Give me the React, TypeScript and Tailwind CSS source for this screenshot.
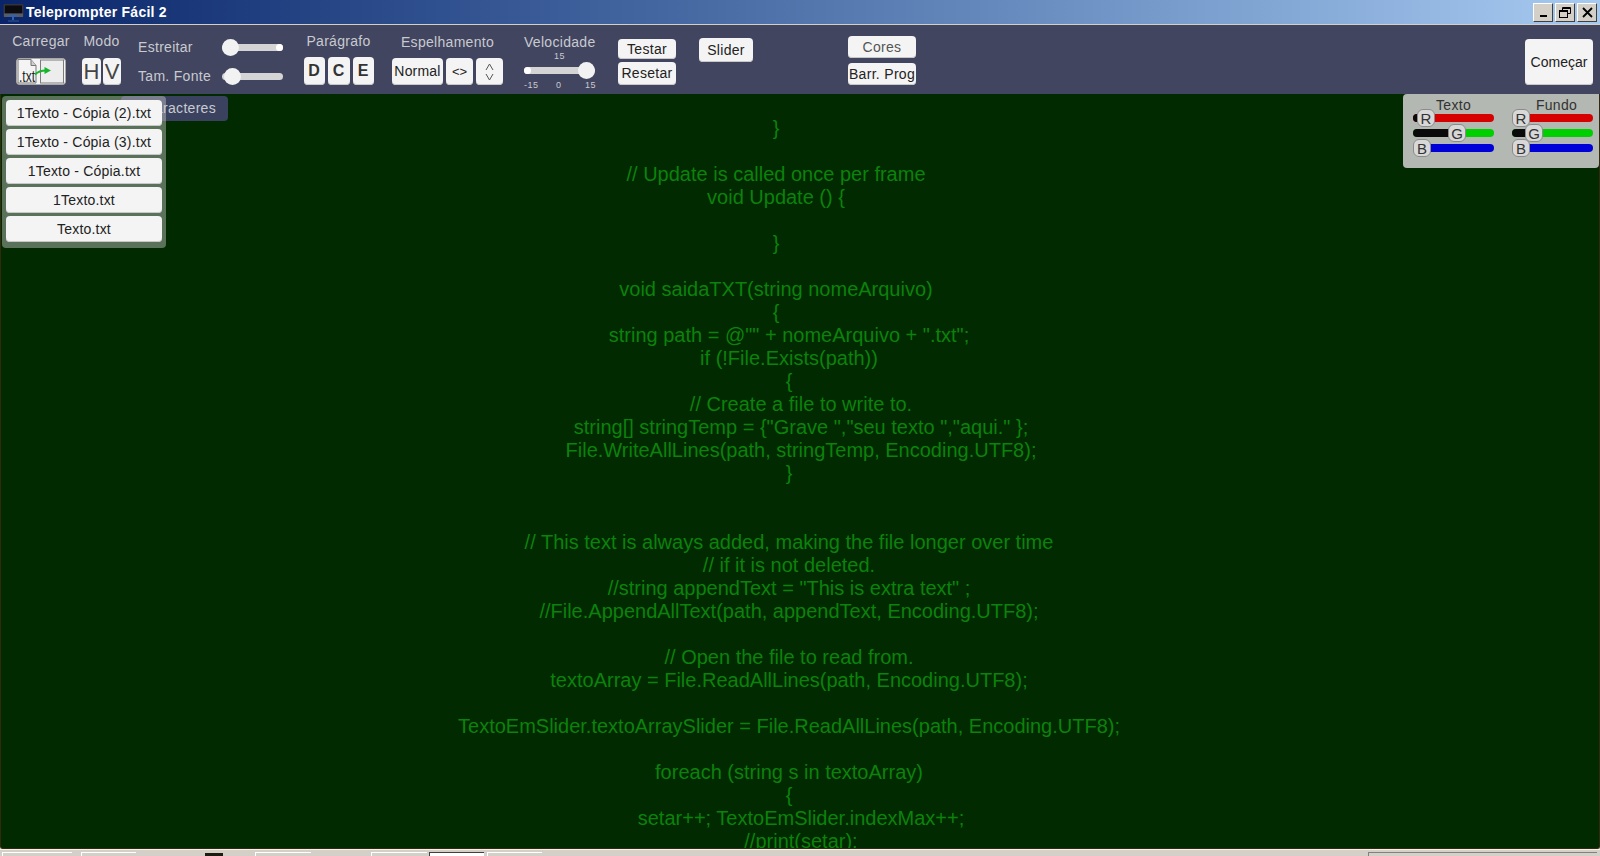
import type { ReactNode } from 'react';

const ARIAL = "font-['Liberation_Sans',Arial,sans-serif]";

type PrompterLine = { text: string; shift?: string };

const SHIFT_A = 'pr-[48px]';
const SHIFT_B = 'pr-[22px]';
const SHIFT_C = 'pl-[2px]';

const LINES: PrompterLine[] = [
  { text: '}', shift: SHIFT_A },
  { text: '' },
  { text: '// Update is called once per frame', shift: SHIFT_A },
  { text: 'void Update () {', shift: SHIFT_A },
  { text: '' },
  { text: '}', shift: SHIFT_A },
  { text: '' },
  { text: 'void saidaTXT(string nomeArquivo)', shift: SHIFT_A },
  { text: '{', shift: SHIFT_A },
  { text: 'string path = @"" + nomeArquivo + ".txt";', shift: SHIFT_B },
  { text: 'if (!File.Exists(path))', shift: SHIFT_B },
  { text: '{', shift: SHIFT_B },
  { text: '// Create a file to write to.', shift: SHIFT_C },
  { text: 'string[] stringTemp = {"Grave ","seu texto ","aqui." };', shift: SHIFT_C },
  { text: 'File.WriteAllLines(path, stringTemp, Encoding.UTF8);', shift: SHIFT_C },
  { text: '}', shift: SHIFT_B },
  { text: '' },
  { text: '' },
  { text: '// This text is always added, making the file longer over time', shift: SHIFT_B },
  { text: '// if it is not deleted.', shift: SHIFT_B },
  { text: '//string appendText = "This is extra text" ;', shift: SHIFT_B },
  { text: '//File.AppendAllText(path, appendText, Encoding.UTF8);', shift: SHIFT_B },
  { text: '' },
  { text: '// Open the file to read from.', shift: SHIFT_B },
  { text: 'textoArray = File.ReadAllLines(path, Encoding.UTF8);', shift: SHIFT_B },
  { text: '' },
  { text: 'TextoEmSlider.textoArraySlider = File.ReadAllLines(path, Encoding.UTF8);', shift: SHIFT_B },
  { text: '' },
  { text: 'foreach (string s in textoArray)', shift: SHIFT_B },
  { text: '{', shift: SHIFT_B },
  { text: 'setar++; TextoEmSlider.indexMax++;', shift: SHIFT_C },
  { text: '//print(setar);', shift: SHIFT_C },
];

const FILES = ['1Texto - Cópia (2).txt', '1Texto - Cópia (3).txt', '1Texto - Cópia.txt', '1Texto.txt', 'Texto.txt'];

function Btn({ className, children }: { className: string; children: ReactNode }) {
  return (
    <div className={`flex items-center justify-center rounded-[4px] bg-[#f4f4f4] text-[#222] shadow-[inset_0_-1px_0_#c8c8c8] ${className}`}>
      {children}
    </div>
  );
}

function Label({ className = '', children }: { className?: string; children: ReactNode }) {
  return <div className={`whitespace-nowrap text-[14px] leading-[16px] tracking-[0.3px] text-[#c9cad0] ${className}`}>{children}</div>;
}

function WhiteSlider({ thumb, endKnob }: { thumb: string; endKnob?: boolean }) {
  return (
    <div className="relative h-[7px] w-[61px] rounded-full bg-[#d4d4d4]">
      <div className={`absolute top-[-5px] h-[17px] w-[17px] rounded-full bg-[#f2f2f2] ${thumb}`} />
      {endKnob && <div className="absolute right-0 top-0 h-[7px] w-[7px] rounded-full bg-white" />}
    </div>
  );
}

function ColorSlider({ letter, track, thumb, fill }: { letter: string; track: string; thumb: string; fill: string }) {
  return (
    <div className={`relative h-[8px] w-[81px] rounded-full ${track}`}>
      <div className={`absolute inset-y-0 left-0 rounded-l-full bg-[#0a0a0a] ${fill}`} />
      <div className={`absolute top-[-5px] flex h-[18px] w-[18px] items-center justify-center rounded-[6px] border border-[#8b8b8b] bg-[#d8d8d8] text-[15px] leading-none text-[#333] ${thumb}`}>
        {letter}
      </div>
    </div>
  );
}

function AppIcon() {
  return (
    <svg width="21" height="21" viewBox="0 0 21 21" className="shrink-0">
      <rect x="0.5" y="2" width="20" height="13" rx="1" fill="#33333a" />
      <rect x="2" y="3.500" width="17" height="8" fill="#0c0c10" />
      <rect x="1" y="11.500" width="19" height="3.500" fill="#565b68" />
      <path d="M6 13h8v1.500h-3v4H9v-4H6z" fill="#2f62b5" />
      <rect x="5" y="18" width="11" height="2" fill="#1f3f7d" />
    </svg>
  );
}

function LoadIcon() {
  return (
    <svg width="50" height="27" viewBox="0 0 50 27">
      <rect x="0.5" y="0.5" width="49" height="26" rx="3" fill="#f4f4f4" stroke="#a8a8a8" />
      <path d="M2 1.500h13l5 6V25H2z" fill="#f4f4f4" stroke="#777" />
      <path d="M15 1.500v6h5" fill="#cfcfcf" stroke="#777" />
      <rect x="24.500" y="2" width="23" height="23" fill="#ededed" stroke="#7c7c7c" />
      <text x="3" y="24" fontFamily="'Liberation Sans', sans-serif" fontSize="16" textLength="16" lengthAdjust="spacingAndGlyphs" fill="#222">.txt</text>
      <path d="M19 16.500c3-3 7-4 11-4" fill="none" stroke="#16b52a" strokeWidth="2" />
      <path d="M28.500 9l6.500 3.500-6.500 3.500z" fill="#16b52a" />
    </svg>
  );
}

function WinButton({ children }: { children: ReactNode }) {
  return (
    <div className="flex h-[19px] w-[20px] items-center justify-center border border-t-white border-l-white border-b-[#404040] border-r-[#404040] bg-[#d4d0c8]">
      {children}
    </div>
  );
}

export default function App() {
  return (
    <div className={`flex h-screen w-[1600px] flex-col overflow-hidden bg-[#d4d0c8] ${ARIAL}`}>
      {/* Title bar */}
      <header className="flex h-[24px] shrink-0 items-center bg-gradient-to-r from-[#0a246a] to-[#a6caf0] pl-[3px] pr-[3px]">
        <AppIcon />
        <span className="ml-[2px] text-[14px] font-bold tracking-[0.25px] text-white">Teleprompter Fácil 2</span>
        <div className="ml-auto flex gap-[2px]">
          <WinButton>
            <div className="mt-[8px] h-[2px] w-[7px] bg-black" />
          </WinButton>
          <WinButton>
            <svg width="12" height="11" viewBox="0 0 12 11" fill="none" stroke="#000">
              <path d="M3.500 3V.5h8v6H9" />
              <path d="M3.500 1.500h8" />
              <rect x="0.500" y="3.500" width="8" height="7" />
              <path d="M.5 4.500h8" />
            </svg>
          </WinButton>
          <WinButton>
            <svg width="11" height="11" viewBox="0 0 11 11" stroke="#000" strokeWidth="1.800">
              <path d="M1 1l9 9M10 1l-9 9" />
            </svg>
          </WinButton>
        </div>
      </header>
      <div className="h-px shrink-0 bg-[#d4d0c8]" />

      {/* Toolbar */}
      <div className="flex h-[69px] shrink-0 bg-[#41455f] pl-[12px]">
        <div className="flex w-[58px] flex-col items-center pt-[8px]">
          <Label>Carregar</Label>
          <div className="mt-[9px]"><LoadIcon /></div>
        </div>
        <div className="ml-[11px] flex w-[41px] flex-col items-center pt-[8px]">
          <Label>Modo</Label>
          <div className="mt-[9px] flex gap-[2px]">
            <Btn className="h-[27px] w-[19px] text-[22px] text-[#444]">H</Btn>
            <Btn className="h-[27px] w-[18px] text-[22px] text-[#444]">V</Btn>
          </div>
        </div>
        <div className="ml-[16px] flex w-[145px] flex-col gap-[13px] pt-[14px]">
          <div className="flex items-center justify-between">
            <Label>Estreitar</Label>
            <WhiteSlider thumb="left-0" endKnob />
          </div>
          <div className="flex items-center justify-between">
            <Label>Tam. Fonte</Label>
            <WhiteSlider thumb="left-[2px]" />
          </div>
        </div>
        <div className="ml-[20px] flex w-[71px] flex-col items-center pt-[8px]">
          <Label>Parágrafo</Label>
          <div className="mt-[8px] flex gap-[3px]">
            <Btn className="h-[28px] w-[21px] text-[16px] font-bold text-[#333]">D</Btn>
            <Btn className="h-[28px] w-[22px] text-[16px] font-bold text-[#333]">C</Btn>
            <Btn className="h-[28px] w-[21px] text-[16px] font-bold text-[#333]">E</Btn>
          </div>
        </div>
        <div className="ml-[18px] flex w-[111px] flex-col items-center pt-[9px]">
          <Label>Espelhamento</Label>
          <div className="mt-[8px] flex gap-[3px]">
            <Btn className="h-[27px] w-[51px] text-[14px] tracking-[0.2px]">Normal</Btn>
            <Btn className="h-[27px] w-[27px] text-[13px]">{'<>'}</Btn>
            <Btn className="h-[27px] w-[27px] text-[#666]">
              <svg width="9" height="18" viewBox="0 0 9 18" fill="none" stroke="#555">
                <path d="M1 7l3.500-6L8 7M1 11l3.500 6L8 11" />
              </svg>
            </Btn>
          </div>
        </div>
        <div className="ml-[21px] flex w-[72px] flex-col pt-[9px]">
          <Label className="pr-[1px] text-center">Velocidade</Label>
          <div className="mt-[1px] pl-[30px] text-[9px] leading-[11px] tracking-[0.5px] text-[#c9cad0]">15</div>
          <div className="relative mt-[5px] h-[7px] w-[71px] rounded-full bg-[#d4d4d4]">
            <div className="absolute left-0 top-0 h-[7px] w-[7px] rounded-full bg-white" />
            <div className="absolute right-0 top-[-5px] h-[17px] w-[17px] rounded-full bg-[#f2f2f2]" />
          </div>
          <div className="mt-[6px] flex justify-between text-[9px] leading-[11px] tracking-[0.5px] text-[#c9cad0]">
            <span>-15</span>
            <span className="pr-[6px]">0</span>
            <span>15</span>
          </div>
        </div>
        <div className="ml-[22px] flex w-[58px] flex-col gap-[3px] pt-[14px] tracking-[0.3px]">
          <Btn className="h-[20px] text-[14px]">Testar</Btn>
          <Btn className="h-[23px] text-[14px]">Resetar</Btn>
        </div>
        <div className="ml-[23px] w-[54px] pt-[13px] tracking-[0.3px]">
          <Btn className="h-[24px] text-[14px]">Slider</Btn>
        </div>
        <div className="ml-[95px] flex w-[68px] flex-col gap-[5px] pt-[11px] tracking-[0.3px]">
          <Btn className="h-[22px] text-[14px] text-[#555]">Cores</Btn>
          <Btn className="h-[22px] whitespace-nowrap text-[14px]">Barr. Prog</Btn>
        </div>
        <div className="ml-auto mr-[7px] pt-[14px]">
          <Btn className="h-[46px] w-[68px] text-[14px]">Começar</Btn>
        </div>
      </div>

      {/* Prompter canvas */}
      <main className="relative flex-1 overflow-hidden rounded-b-[3px] border-x border-b border-[#33290f] bg-[#012a00]">
        <div className="flex flex-col pt-[23px] text-[20px] leading-[23px] text-[#0c820c]">
          {LINES.map((line, i) => (
            <div key={i} className={`h-[23px] shrink-0 whitespace-pre text-center ${line.shift ?? ''}`}>
              {line.text}
            </div>
          ))}
        </div>

        {/* Hidden tab behind the file list */}
        <div className="absolute left-[120px] top-[2px] flex h-[25px] w-[107px] items-center justify-end rounded-[4px] bg-[#3b4260] pr-[12px] text-[14px] tracking-[0.3px] text-[#c9cad0]">
          Caracteres
        </div>

        {/* File list */}
        <div className="absolute left-[1px] top-[2px] flex w-[164px] flex-col gap-[3px] rounded-[4px] bg-[#c8c8c8]/45 px-[4px] pb-[6px] pt-[4px]">
          {FILES.map((f) => (
            <Btn key={f} className="h-[26px] text-[14px] tracking-[0.2px] text-[#1c1c1c]">{f}</Btn>
          ))}
        </div>

        {/* RGB panel */}
        <div className="absolute right-0 top-0 flex h-[74px] w-[196px] gap-[18px] rounded-l-[4px] rounded-br-[4px] bg-[#b3b8b2] pl-[10px] pt-[4px] text-[#333]">
          <div className="w-[81px]">
            <div className="text-center text-[14px] leading-[15px] tracking-[0.3px]">Texto</div>
            <div className="mt-[1px] flex flex-col gap-[7px]">
              <ColorSlider letter="R" track="bg-[#d60000]" thumb="left-[4px]" fill="w-[8px]" />
              <ColorSlider letter="G" track="bg-[#00d000]" thumb="left-[35px]" fill="w-[40px]" />
              <ColorSlider letter="B" track="bg-[#0000d8]" thumb="left-0" fill="w-0" />
            </div>
          </div>
          <div className="w-[81px]">
            <div className="pl-[8px] text-center text-[14px] leading-[15px] tracking-[0.3px]">Fundo</div>
            <div className="mt-[1px] flex flex-col gap-[7px]">
              <ColorSlider letter="R" track="bg-[#d60000]" thumb="left-0" fill="w-0" />
              <ColorSlider letter="G" track="bg-[#00d000]" thumb="left-[13px]" fill="w-[18px]" />
              <ColorSlider letter="B" track="bg-[#0000d8]" thumb="left-0" fill="w-0" />
            </div>
          </div>
        </div>
      </main>

      {/* Taskbar sliver */}
      <div className="h-px shrink-0 bg-[#f4f2ec]" />
      <footer className="flex h-[6px] shrink-0 items-start bg-[#d4d0c8] pl-[2px] pt-[2px]">
        <div className="h-full w-[70px] border-l border-t border-white" />
        <div className="ml-[9px] h-full w-[55px] border-l border-t border-white" />
        <div className="ml-[69px] mt-px h-[4px] w-[18px] bg-[#1c1c10]" />
        <div className="ml-[32px] h-full w-[56px] border-l border-t border-white" />
        <div className="ml-[60px] h-full w-[56px] border-l border-t border-white" />
        <div className="ml-[2px] h-full w-[55px] border-l border-t border-[#404040] bg-white" />
        <div className="ml-[3px] h-full w-[55px] border-l border-t border-white" />
        <div className="ml-auto mr-[3px] h-full w-[229px] border-l border-t border-[#808080]" />
      </footer>
    </div>
  );
}
